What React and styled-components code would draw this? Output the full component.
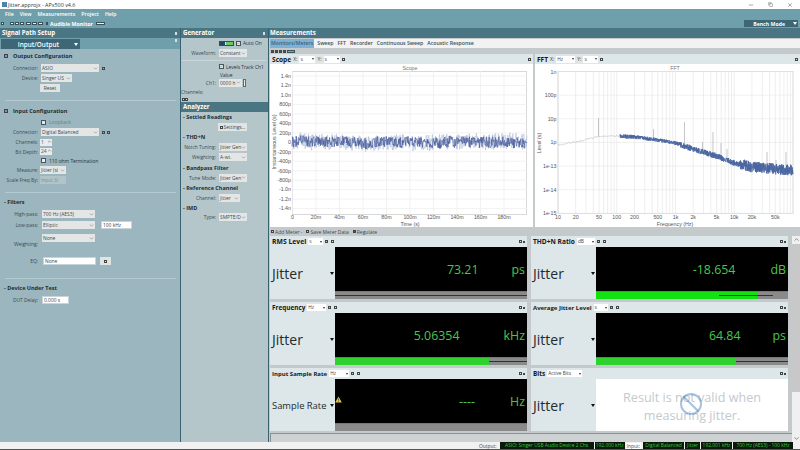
import React from 'react';
import styled, { createGlobalStyle } from 'styled-components';
import { ChevronDown, ChevronUp, Minus, Copy, X, Ban, Check } from 'lucide-react';

const GlobalStyle = createGlobalStyle`
  html, body { margin: 0; padding: 0; background: #fff; }
  * { box-sizing: border-box; }
  body { font-family: "Open Sans", "Noto Sans", sans-serif; }
`;

const Page = styled.div`
  width: 800px;
  height: 450px;
  overflow: hidden;
  display: flex;
  flex-direction: column;
  color: #26343a;
  font-size: 4.9px;
`;

const TitleBar = styled.div`
  height: 9px;
  background: #fff;
  display: flex;
  align-items: center;
  padding: 0 7px 0 2px;
  color: #333;
  font-size: 5.4px;
`;

const AppIcon = styled.span`
  width: 5px;
  height: 5px;
  background: #4a86a8;
  margin-right: 1px;
`;

const WindowButtons = styled.div`
  margin-left: auto;
  display: flex;
  align-items: center;
  gap: 14px;
  color: #555;
`;

const MenuBar = styled.div`
  height: 10px;
  background: #6f9fab;
  display: flex;
  align-items: center;
  gap: 6px;
  padding-left: 5px;
  color: #fff;
  font-weight: 600;
  font-size: 5.2px;
`;

const ToolBar = styled.div`
  height: 9px;
  background: #6f9fab;
  display: flex;
  align-items: center;
  padding: 0 2px 0 1px;
  color: #fff;
  font-weight: 700;
  font-size: 5.3px;
`;

const ToolGroup = styled.div`
  display: flex;
  gap: 1px;
  margin-right: ${p => p.$mr || 0}px;
  margin-left: ${p => p.$ml || 0}px;
`;

const ToolDot = styled.span`
  width: ${p => p.$w || 3}px;
  height: 3px;
  background: ${p => p.$c || '#e8f0f2'};
  border: 0.5px solid #38525c;
`;

const BenchMode = styled.div`
  margin-left: auto;
  width: 54px;
  height: 7px;
  background: #3d6676;
  display: flex;
  align-items: center;
  justify-content: flex-end;
  gap: 8px;
  padding-right: 1px;
  font-size: 5.2px;
`;

const Caret = styled.span`
  width: 0;
  height: 0;
  border-left: ${p => p.$s || 2}px solid transparent;
  border-right: ${p => p.$s || 2}px solid transparent;
  border-top: ${p => (p.$s || 2) + 1}px solid ${p => p.$c || '#fff'};
`;

const Columns = styled.div`
  flex: 1;
  display: flex;
  min-height: 0;
`;

const SetupColumn = styled.section`
  width: 181px;
  background: #9bb6be;
  border-right: 1px solid #37616f;
`;

const GeneratorColumn = styled.section`
  width: 88px;
  background: #b5c6cb;
  border-right: 1px solid #37616f;
`;

const MeasureColumn = styled.section`
  flex: 1;
  min-width: 0;
  background: #c4cacc;
  display: flex;
  flex-direction: column;
`;

const PanelTitle = styled.div`
  height: 10px;
  background: #4a7684;
  color: #fff;
  font-weight: 700;
  font-size: 6.1px;
  line-height: 10px;
  padding-left: ${p => p.$pl || 2}px;
  display: flex;
  align-items: center;
  justify-content: space-between;
  padding-right: 3px;
`;

const TitlePin = styled.span`
  width: 2px;
  height: 3px;
  background: #cfe0e4;
`;

const TabStrip = styled.div`
  height: 11px;
  background: #6f9fab;
  padding-top: 1px;
  display: flex;
  justify-content: space-between;
  align-items: flex-start;
  padding-right: 3px;
`;

const ActiveTab = styled.div`
  margin-left: 1px;
  width: 79px;
  height: 10px;
  background: #3d6676;
  color: #fff;
  font-weight: 600;
  font-size: 6.4px;
  display: flex;
  align-items: center;
  justify-content: flex-end;
  gap: 15px;
  padding-right: 2px;
`;

const Heading = styled.div`
  height: 10px;
  margin-top: ${p => p.$mt || 0}px;
  padding-left: ${p => p.$pl || 4}px;
  display: flex;
  align-items: center;
  gap: ${p => p.$gap || 2}px;
  font-weight: 700;
  font-size: 5.5px;
  color: #1f2c31;
`;

const Divider = styled.hr`
  margin: ${p => p.$mt || 0}px ${p => p.$r || 4}px 0 ${p => p.$l || 5}px;
  border: 0;
  height: 1px;
  background: ${p => p.$c || '#b4cbd2'};
`;

const Row = styled.div`
  height: ${p => p.$h || 10}px;
  margin-top: ${p => p.$mt || 0}px;
  display: flex;
  align-items: center;
  white-space: nowrap;
`;

const Label = styled.span`
  width: ${p => p.$w || 38}px;
  margin-right: ${p => p.$mr || 3}px;
  text-align: right;
  white-space: nowrap;
  flex-shrink: 0;
  color: #3a4b52;
`;

const MutedText = styled.span`
  color: #6d7f86;
`;

const SelectBox = styled.div`
  width: ${p => p.$w}px;
  height: 8px;
  background: ${p => (p.$off ? '#b3c4c9' : '#e4e6e6')};
  color: ${p => (p.$off ? '#7d8d92' : '#3a474c')};
  display: flex;
  align-items: center;
  justify-content: space-between;
  padding: 0 1px;
  overflow: hidden;
  white-space: nowrap;
  flex-shrink: 0;
  align-self: ${p => (p.$top ? 'flex-start' : 'center')};
  margin-left: ${p => p.$ml || 0}px;
  svg { flex-shrink: 0; color: #556; }
`;

const TextInput = styled.div`
  width: ${p => p.$w}px;
  height: 8px;
  background: #fff;
  border: 0.5px solid #c8d4d8;
  color: #444;
  padding-left: 1px;
  line-height: 7px;
  margin-left: ${p => p.$ml || 0}px;
`;

const PushButton = styled.div`
  width: ${p => p.$w}px;
  height: 8px;
  margin-left: ${p => p.$ml || 0}px;
  background: #dfe4e5;
  display: flex;
  align-items: center;
  justify-content: center;
  gap: 1px;
  color: #38474d;
`;

const Spinner = styled.div`
  width: 12px;
  height: 7px;
  background: #e9ecec;
  padding-left: 1px;
  line-height: 7px;
  color: #555;
  display: flex;
  justify-content: space-between;
  svg { color: #333; }
`;

const SpinButtons = styled.span`
  width: 3px;
  height: 8px;
  margin-left: 1px;
  background: #e9ecec;
  border: 0.5px solid #5b6b71;
`;

const CheckBox = styled.span`
  width: 5px;
  height: 5px;
  background: ${p => (p.$soft ? '#dfe7e9' : '#e8eeee')};
  border: 0.5px solid #45565c;
  margin: 0 ${p => p.$mr || 2}px 0 ${p => p.$ml || 0}px;
  display: inline-flex;
  align-items: center;
  justify-content: center;
  flex-shrink: 0;
  svg { color: #333; }
`;

const TinyBox = styled.span`
  width: ${p => p.$s || 3}px;
  height: ${p => p.$s || 3}px;
  border: 0.6px solid #444;
  background: ${p => p.$c || 'transparent'};
  margin-left: ${p => p.$ml || 0}px;
  flex-shrink: 0;
`;

const GenToggle = styled.span`
  width: 15px;
  height: 5px;
  margin: 0 2px 0 38px;
  background: linear-gradient(90deg, #1e4a68 0 5px, #dbe6e0 5px 6px, #6cc56c 6px);
  border: 0.5px solid #2b5060;
`;

const Tabs = styled.div`
  height: 9px;
  margin-top: 1px;
  margin-left: 1px;
  background: #f2f2f2;
  display: flex;
  align-items: center;
  gap: 2px;
  font-weight: 600;
  font-size: 5.2px;
  color: #32505a;
`;

const Tab = styled.span`
  height: 9px;
  line-height: 9px;
  padding: 0 1px;
  background: ${p => (p.$active ? '#7fb1d6' : 'transparent')};
  color: ${p => (p.$active ? '#39647a' : '#32505a')};
`;

const SubBar = styled.div`
  height: 6px;
  margin-left: 1px;
  background: #c4cacc;
  display: flex;
  align-items: center;
  gap: 1px;
  padding-left: 1px;
`;

const ChartRow = styled.div`
  height: 173px;
  padding-left: 1px;
  display: grid;
  grid-template-columns: 263px 265px;
  gap: 2px;
`;

const ChartPanel = styled.div`
  background: #fff;
  display: flex;
  flex-direction: column;
  min-width: 0;
`;

const PaneHead = styled.div`
  height: ${p => p.$h || 10}px;
  background: #dde6e8;
  display: flex;
  align-items: center;
  padding: 0 2px;
  gap: 2px;
  flex-shrink: 0;
`;

const PaneName = styled.span`
  font-weight: 700;
  font-size: ${p => p.$size || 7}px;
  color: #15191b;
  white-space: nowrap;
`;

const UnitBox = styled.span`
  width: ${p => p.$w || 15}px;
  height: 7px;
  background: #fff;
  color: #444;
  font-size: 4.8px;
  line-height: 7px;
  padding-left: 1px;
  display: flex;
  justify-content: space-between;
  align-items: center;
  padding-right: 1px;
`;

const AxisLetter = styled.span`
  color: #444;
  font-size: 5px;
`;

const HeadEnd = styled.span`
  margin-left: auto;
  display: flex;
  gap: 1px;
  align-items: center;
`;

const MeterBar = styled.div`
  height: 9px;
  margin-left: 1px;
  display: flex;
  align-items: center;
  gap: 4px;
  padding-left: 1px;
  font-size: 5px;
  color: #39474c;
`;

const BarItem = styled.span`
  display: flex;
  align-items: center;
  gap: 1px;
`;

const MeterArea = styled.div`
  flex: 1;
  min-height: 0;
  margin-left: 1px;
  display: flex;
  position: relative;
`;

const MeterGrid = styled.div`
  width: 523px;
  display: grid;
  grid-template-columns: 257px 257px;
  grid-auto-rows: 63px;
  column-gap: 4px;
  row-gap: 3px;
  align-content: start;
`;

const MeterCard = styled.div`
  display: flex;
  flex-direction: column;
  background: #dde6e8;
`;

const MeterBody = styled.div`
  flex: 1;
  display: flex;
  min-height: 0;
`;

const SourcePick = styled.div`
  width: 65px;
  padding: 0 1px 0 2px;
  display: flex;
  align-items: center;
  justify-content: space-between;
  font-size: ${p => p.$size || 14}px;
  color: #222b2f;
  white-space: nowrap;
`;

const Display = styled.div`
  flex: 1;
  display: flex;
  flex-direction: column;
  min-width: 0;
  position: relative;
`;

const Readout = styled.div`
  height: 44px;
  background: #000;
  color: #45c84f;
  display: flex;
  align-items: center;
  justify-content: flex-end;
  padding-right: 2px;
  font-size: 12.4px;
`;

const ReadValue = styled.span`
  margin-right: ${p => p.$gap}px;
`;

const ReadUnit = styled.span``;

const LevelBar = styled.div`
  height: 8px;
  background: #8a8a8a;
  position: relative;
  border-top: 1px solid #777;
`;

const LevelFill = styled.div`
  height: 100%;
  width: ${p => p.$pct}%;
  background: ${p => (p.$bright ? '#12e212' : '#2ed12e')};
`;

const PeakLine = styled.div`
  position: absolute;
  top: 3px;
  height: 1px;
  left: ${p => p.$from}%;
  right: ${p => p.$to}%;
  background: #333;
`;

const WarnMark = styled.svg`
  position: absolute;
  left: 0;
  top: 17px;
`;

const InvalidNote = styled.div`
  flex: 1;
  background: #fff;
  color: #c3c9ce;
  font-size: 12.6px;
  line-height: 18px;
  text-align: center;
  display: flex;
  align-items: center;
  justify-content: center;
  position: relative;
  padding-top: 4px;
  svg {
    position: absolute;
    left: 83px;
    top: 13px;
    color: rgba(86, 134, 190, 0.5);
  }
`;

const FooterBox = styled.div`
  position: absolute;
  left: 0;
  right: 0;
  bottom: 0;
  height: 9px;
  border: 1px solid #8b9093;
  border-bottom: 0;
  background: #cdd1d2;
`;

const ScrollBar = styled.div`
  position: absolute;
  right: 0;
  top: 0;
  bottom: 0;
  width: 8px;
  background: #f0f0f0;
  display: flex;
  flex-direction: column;
  align-items: center;
  justify-content: space-between;
  color: #444;
  z-index: 1;
`;

const ScrollThumb = styled.div`
  position: absolute;
  left: 0;
  right: 0;
  top: 8px;
  height: 148px;
  background: #c8c8c8;
`;

const StatusBar = styled.div`
  height: 7px;
  background: #f1f1f1;
  display: flex;
  align-items: center;
  justify-content: flex-end;
  gap: 1px;
  padding-right: 7px;
  font-size: 4.9px;
  white-space: nowrap;
`;

const StatusLabel = styled.span`
  color: #444;
  padding: 0 1px;
  background: ${p => (p.$boxed ? '#fff' : 'transparent')};
  margin-right: 1px;
`;

const StatusValue = styled.span`
  height: 7px;
  line-height: 7px;
  background: #0a1a0a;
  color: #35c83f;
  padding: 0 1px;
  width: ${p => p.$w}px;
  text-align: center;
  overflow: hidden;
`;

const BottomEdge = styled.div`
  height: 1px;
  background: #555;
`;

// seeded so that every render draws the same trace
const makeRand = seed => () => {
  seed = (seed * 16807) % 2147483647;
  return seed / 2147483647 - 0.5;
};

const scopeTrace = (seed, amp) => {
  const rand = makeRand(seed);
  const pts = [];
  let drift = 0;
  for (let x = 292; x <= 527; x += 0.4) {
    drift = drift * 0.97 + rand() * 0.6;
    pts.push(`${x.toFixed(1)},${(142 + drift + rand() * amp).toFixed(1)}`);
  }
  return pts.join(' ');
};

const fftX = f => 558 + Math.log10(f / 10) * 58.75;
const curveKnots = [
  [10, 145], [20, 142], [50, 136.5], [100, 136], [200, 137], [500, 140],
  [1000, 143], [2000, 149], [5000, 156], [10000, 163], [20000, 167], [50000, 169], [100000, 170],
];
const curveY = f => {
  for (let i = 0; i < curveKnots.length - 1; i++) {
    const [f0, y0] = curveKnots[i];
    const [f1, y1] = curveKnots[i + 1];
    if (f <= f1) {
      const t = Math.log10(f / f0) / Math.log10(f1 / f0);
      return y0 + (y1 - y0) * t;
    }
  }
  return 170;
};

const fftTrace = (seed, from, to, step, ampAt) => {
  const rand = makeRand(seed);
  const pts = [];
  for (let x = from; x <= to; x += step) {
    const f = 10 * Math.pow(10, (x - 558) / 58.75);
    pts.push(`${x.toFixed(1)},${(curveY(f) + rand() * ampAt(x)).toFixed(1)}`);
  }
  return pts.join(' ');
};

const SCOPE_Y = ['1.4n', '1.2n', '1.0n', '800p', '600p', '400p', '200p', '0', '-200p', '-400p', '-600p', '-800p', '-1.0n', '-1.2n', '-1.4n'];
const SCOPE_X = ['0', '20m', '40m', '60m', '80m', '100m', '120m', '140m', '160m', '180m'];

const AXIS = { fontSize: 5.3, fill: '#555', fontFamily: '"Liberation Sans", sans-serif' };

const ScopeChart = () => (
  <svg width="263" height="163" viewBox="270 64 263 163">
    <text x="410" y="69.8" textAnchor="middle" {...AXIS} fill="#777">Scope</text>
    <rect x="292.5" y="71.5" width="234" height="143" fill="#fff" stroke="#d8d8d8" />
    {SCOPE_X.map((_, i) => (
      <line key={i} x1={292.5 + i * 23.5} x2={292.5 + i * 23.5} y1="71" y2="214" stroke="#ececec" strokeWidth="0.7" />
    ))}
    {SCOPE_Y.map((l, i) => (
      <g key={l}>
        <line x1="292" x2="527" y1={76 + i * 9.47} y2={76 + i * 9.47} stroke="#ececec" strokeWidth="0.7" />
        <text x="291" y={77.8 + i * 9.47} textAnchor="end" {...AXIS}>{l}</text>
      </g>
    ))}
    {SCOPE_X.map((l, i) => (
      <text key={l} x={292.5 + i * 23.5} y="219.2" textAnchor="middle" {...AXIS}>{l}</text>
    ))}
    <text x="410" y="225.5" textAnchor="middle" {...AXIS}>Time (s)</text>
    <text transform="translate(276 142) rotate(-90)" textAnchor="middle" {...AXIS}>Instantaneous Level (s)</text>
    <polyline points={scopeTrace(77, 16)} fill="none" stroke="#b9c4de" strokeWidth="0.7" />
    <polyline points={scopeTrace(4211, 11)} fill="none" stroke="#445a98" strokeWidth="0.65" />
  </svg>
);

const FFT_Y = ['1n', '100p', '10p', '1p', '1e-13', '1e-14', '1e-15'];
const FFT_X = [[10, '10'], [20, '20'], [50, '50'], [100, '100'], [200, '200'], [500, '500'], [1000, '1k'], [2000, '2k'], [5000, '5k'], [10000, '10k'], [20000, '20k'], [50000, '50k']];
const FFT_SPIKES = [[598.5, 118], [653.5, 129], [684.5, 122], [702.5, 142], [713, 132], [721, 143], [727, 149], [767, 152], [776, 160], [786, 152]];
const minorFreqs = [];
for (let d = 10; d < 100000; d *= 10) {
  for (let m = 1; m < 10; m++) minorFreqs.push(d * m);
}

const FftChart = () => (
  <svg width="265" height="163" viewBox="535 64 265 163">
    <text x="675" y="69.8" textAnchor="middle" {...AXIS} fill="#777">FFT</text>
    <rect x="558" y="71.5" width="235" height="142" fill="#fff" stroke="#d8d8d8" />
    {minorFreqs.map(f => (
      <line key={f} x1={fftX(f)} x2={fftX(f)} y1="71" y2="213" stroke={f % 10 ** Math.floor(Math.log10(f)) ? '#f1f1f1' : '#e2e2e2'} strokeWidth="0.6" />
    ))}
    {FFT_Y.map((l, i) => (
      <g key={l}>
        <line x1="558" x2="793" y1={71.5 + i * 23.65} y2={71.5 + i * 23.65} stroke="#e6e6e6" strokeWidth="0.6" />
        <text x="556.5" y={73.5 + i * 23.65} textAnchor="end" {...AXIS}>{l}</text>
      </g>
    ))}
    {FFT_X.map(([f, l]) => (
      <text key={l} x={fftX(f)} y="219.2" textAnchor="middle" {...AXIS}>{l}</text>
    ))}
    <text x="675" y="225.5" textAnchor="middle" {...AXIS}>Frequency (Hz)</text>
    <text transform="translate(541 143) rotate(-90)" textAnchor="middle" {...AXIS}>Level (s)</text>
    {FFT_SPIKES.map(([x, top]) => (
      <line key={x} x1={x} x2={x} y1={top} y2={curveY(10 * Math.pow(10, (x - 558) / 58.75))} stroke="#a9aeb5" strokeWidth="0.7" />
    ))}
    <polyline points={fftTrace(911, 558, 640, 0.9, () => 1.6)} fill="none" stroke="#b6b9bd" strokeWidth="0.6" />
    <polyline points={fftTrace(353, 620, 793, 0.15, x => (x < 680 ? 4 : x < 740 ? 6 : 11))} fill="none" stroke="#4a669f" strokeWidth="0.8" />
  </svg>
);

const Select = ({ w, children, ...rest }) => (
  <SelectBox $w={w} {...rest}>
    <span>{children}</span>
    <ChevronDown size={5} strokeWidth={2} />
  </SelectBox>
);

const Tick = () => <Check size={5} strokeWidth={3} />;

const Unit = ({ w, children }) => (
  <UnitBox $w={w}>
    {children}
    <Caret $s={1} $c="#333" />
  </UnitBox>
);

const HeadIcons = () => (
  <>
    <TinyBox $c="#b8c4c8" />
    <TinyBox $ml={1} />
  </>
);

const CardHead = ({ name, size, unit, unitW }) => (
  <PaneHead $h={11}>
    <PaneName $size={size}>{name}</PaneName>
    <Unit w={unitW}>{unit}</Unit>
    <HeadIcons />
    <HeadEnd>
      <TinyBox />
      <TinyBox $s={2} $c="#444" />
    </HeadEnd>
  </PaneHead>
);

const Meter = ({ name, size, unit, unitW, value, valueGap, unitText, pct, bright, line, pick = 'Jitter', pickSize, warn }) => (
  <MeterCard>
    <CardHead name={name} size={size} unit={unit} unitW={unitW} />
    <MeterBody>
      <SourcePick $size={pickSize}>
        {pick}
        <Caret $s={2} $c="#111" />
      </SourcePick>
      <Display>
        <Readout>
          <ReadValue $gap={valueGap}>{value}</ReadValue>
          <ReadUnit>{unitText}</ReadUnit>
        </Readout>
        {warn && (
          <WarnMark width="7" height="7" viewBox="0 0 7 7">
            <path d="M3.5 0.5 L6.8 6.5 L0.2 6.5 Z" fill="#e5c64a" />
            <path d="M3.5 2.4 V4.6 M3.5 5.2 V5.9" stroke="#333" strokeWidth="0.7" />
          </WarnMark>
        )}
        <LevelBar>
          {pct > 0 && <LevelFill $pct={pct} $bright={bright} />}
          {line && <PeakLine $from={line[0]} $to={line[1]} />}
        </LevelBar>
      </Display>
    </MeterBody>
  </MeterCard>
);

const SignalPathSetup = () => (
  <SetupColumn>
    <PanelTitle>
      Signal Path Setup
      <TitlePin />
    </PanelTitle>
    <TabStrip>
      <ActiveTab>
        Input/Output
        <Caret $s={2} />
      </ActiveTab>
      <TitlePin />
    </TabStrip>
    <Heading $mt={2} $gap={5}>
      <TinyBox $s={4} $c="#7f9aa3" />
      Output Configuration
    </Heading>
    <Row $mt={2}>
      <Label>Connector:</Label>
      <Select w={58}>ASIO</Select>
      <TinyBox $ml={3} />
    </Row>
    <Row>
      <Label>Device:</Label>
      <Select w={31}>Singer US</Select>
    </Row>
    <Row>
      <Label $mr={2} />
      <PushButton $w={20}>Reset</PushButton>
    </Row>
    <Divider $mt={7} />
    <Heading $mt={5} $gap={5}>
      <TinyBox $s={4} $c="#7f9aa3" />
      Input Configuration
    </Heading>
    <Row $mt={1}>
      <Label />
      <CheckBox $soft $mr={3} />
      <MutedText>Loopback</MutedText>
    </Row>
    <Row>
      <Label>Connector:</Label>
      <Select w={58}>Digital Balanced</Select>
      <TinyBox $ml={3} />
      <TinyBox $ml={2} />
    </Row>
    <Row>
      <Label $mr={2}>Channels:</Label>
      <Spinner>1<ChevronUp size={5} /></Spinner>
    </Row>
    <Row $h={9}>
      <Label $mr={2}>Bit Depth:</Label>
      <Spinner>24<ChevronUp size={5} /></Spinner>
    </Row>
    <Row $h={9}>
      <Label />
      <CheckBox $mr={3} />
      <span>110 ohm Termination</span>
    </Row>
    <Row>
      <Label $mr={2}>Measure:</Label>
      <Select w={26}>Jitter (si</Select>
    </Row>
    <Row $h={9}>
      <Label $mr={2}>Scale Freq By:</Label>
      <SelectBox $w={26} $off>Input SI</SelectBox>
    </Row>
    <Divider $mt={8} />
    <Heading $mt={4}>- Filters</Heading>
    <Row $mt={2}>
      <Label $mr={4}>High-pass:</Label>
      <Select w={53}>700 Hz (AES3)</Select>
    </Row>
    <Row $mt={1}>
      <Label $mr={4}>Low-pass:</Label>
      <Select w={53}>Elliptic</Select>
      <TextInput $w={31} $ml={6}>100 kHz</TextInput>
    </Row>
    <Row $h={20} $mt={4}>
      <Label $mr={4}>Weighting:</Label>
      <Select w={53} $top>None</Select>
    </Row>
    <Row $mt={2}>
      <Label $mr={5}>EQ:</Label>
      <TextInput $w={53}>None</TextInput>
      <PushButton $w={11} $ml={4}><TinyBox /></PushButton>
    </Row>
    <Divider $mt={12} />
    <Heading $mt={4}>- Device Under Test</Heading>
    <Row $mt={2}>
      <Label $mr={4}>DUT Delay:</Label>
      <TextInput $w={27}>0.000 s</TextInput>
    </Row>
  </SetupColumn>
);

const GeneratorAnalyzer = () => (
  <GeneratorColumn>
    <PanelTitle>
      Generator
      <TitlePin />
    </PanelTitle>
    <Row>
      <GenToggle />
      <CheckBox><Tick /></CheckBox>
      <span>Auto On</span>
    </Row>
    <Row>
      <Label $w={35}>Waveform:</Label>
      <Select w={28}>Constant</Select>
    </Row>
    <Divider $mt={2} $l={1} $r={2} $c="#c9d6da" />
    <Row $h={9} $mt={1}>
      <Label $w={35} />
      <CheckBox><Tick /></CheckBox>
      <span>Levels Track Ch1</span>
    </Row>
    <Row $h={7}>
      <Label $w={36} />
      <span>Value</span>
    </Row>
    <Row $h={9}>
      <Label $w={35}>Ch1:</Label>
      <Select w={23}>0000 h</Select>
      <SpinButtons />
    </Row>
    <Row $h={10}>
      <Label $w={22} $mr={0}>Channels:</Label>
    </Row>
    <Row $h={5}>
      <TinyBox $s={3} $ml={1} $c="#d8e0e2" />
      <TinyBox $s={3} $c="#d8e0e2" />
    </Row>
    <PanelTitle>Analyzer</PanelTitle>
    <Heading $pl={2}>- Settled Readings</Heading>
    <Row $h={10}>
      <Label $w={33} $mr={4} />
      <PushButton $w={29}><TinyBox />Settings...</PushButton>
    </Row>
    <Heading $pl={2}>- THD+N</Heading>
    <Row $h={10}>
      <Label $w={35}>Notch Tuning:</Label>
      <Select w={28}>Jitter Gen</Select>
    </Row>
    <Row $h={10}>
      <Label $w={35}>Weighting:</Label>
      <Select w={28}>A-wt.</Select>
    </Row>
    <Heading $pl={2} $mt={1}>- Bandpass Filter</Heading>
    <Row $h={9}>
      <Label $w={35}>Tune Mode:</Label>
      <Select w={28}>Jitter Gen</Select>
    </Row>
    <Heading $pl={2} $mt={1}>- Reference Channel</Heading>
    <Row $h={10}>
      <Label $w={35}>Channel:</Label>
      <Select w={21}>Jitter</Select>
    </Row>
    <Heading $pl={2}>- IMD</Heading>
    <Row $h={8}>
      <Label $w={35}>Type:</Label>
      <Select w={28}>SMPTE/D</Select>
    </Row>
  </GeneratorColumn>
);

const Measurements = () => (
  <MeasureColumn>
    <PanelTitle $pl={1}>Measurements</PanelTitle>
    <Tabs>
      <Tab $active>Monitors/Meters</Tab>
      <Tab>Sweep</Tab>
      <Tab>FFT</Tab>
      <Tab>Recorder</Tab>
      <Tab>Continuous Sweep</Tab>
      <Tab>Acoustic Response</Tab>
    </Tabs>
    <SubBar>
      <TinyBox $c="#555" />
      <TinyBox $c="#555" />
      <TinyBox $c="#555" />
      <TinyBox $c="#555" />
      <ToolDot $w={8} $c="#62c562" />
    </SubBar>
    <ChartRow>
      <ChartPanel>
        <PaneHead>
          <PaneName $size={6.6}>Scope</PaneName>
          <AxisLetter>X:</AxisLetter>
          <Unit w={16}>s</Unit>
          <AxisLetter>Y:</AxisLetter>
          <Unit w={16}>s</Unit>
          <TinyBox />
          <HeadEnd><TinyBox /></HeadEnd>
        </PaneHead>
        <ScopeChart />
      </ChartPanel>
      <ChartPanel>
        <PaneHead>
          <PaneName $size={6.6}>FFT</PaneName>
          <AxisLetter>X:</AxisLetter>
          <Unit w={19}>Hz</Unit>
          <AxisLetter>Y:</AxisLetter>
          <Unit w={15}>s</Unit>
          <TinyBox />
          <HeadEnd><TinyBox /></HeadEnd>
        </PaneHead>
        <FftChart />
      </ChartPanel>
    </ChartRow>
    <MeterBar>
      <BarItem><TinyBox />Add Meter -</BarItem>
      <BarItem><TinyBox />Save Meter Data</BarItem>
      <BarItem><TinyBox $c="#555" />Regulate</BarItem>
    </MeterBar>
    <MeterArea>
      <MeterGrid>
        <Meter name="RMS Level" size={6.8} unit="s" unitW={15} value="73.21" valueGap={33} unitText="ps" pct={0} line={[0, 0]} />
        <Meter name="THD+N Ratio" size={6.6} unit="dB" unitW={18} value="-18.654" valueGap={35} unitText="dB" pct={84} bright line={[64, 8]} />
        <Meter name="Frequency" size={6.4} unit="Hz" unitW={19} value="5.06354" valueGap={44} unitText="kHz" pct={80} line={[80, 0]} />
        <Meter name="Average Jitter Level" size={6} unit="s" unitW={14} value="64.84" valueGap={32} unitText="ps" pct={73} line={[73, 0]} />
        <Meter name="Input Sample Rate" size={6} unit="Hz" unitW={20} value="----" valueGap={35} unitText="Hz" pct={0} pick="Sample Rate" pickSize={9.4} warn />
        <MeterCard>
          <PaneHead $h={11}>
            <PaneName $size={6.4}>Bits</PaneName>
            <Unit w={35}>Active Bits</Unit>
            <HeadEnd>
              <TinyBox />
              <TinyBox $s={2} $c="#444" />
            </HeadEnd>
          </PaneHead>
          <MeterBody>
            <SourcePick>
              Jitter
              <Caret $s={2} $c="#111" />
            </SourcePick>
            <InvalidNote>
              <span>Result is not valid when<br />measuring jitter.</span>
              <Ban size={24} strokeWidth={2} />
            </InvalidNote>
          </MeterBody>
        </MeterCard>
      </MeterGrid>
      <FooterBox />
      <ScrollBar>
        <ChevronUp size={7} />
        <ScrollThumb />
        <ChevronDown size={7} />
      </ScrollBar>
    </MeterArea>
  </MeasureColumn>
);

export default function App() {
  return (
    <Page>
      <GlobalStyle />
      <TitleBar>
        <AppIcon />
        Jitter.approjx - APx500 v4.6
        <WindowButtons>
          <Minus size={6} />
          <Copy size={5} />
          <X size={6} />
        </WindowButtons>
      </TitleBar>
      <MenuBar>
        <span>File</span>
        <span>View</span>
        <span>Measurements</span>
        <span>Project</span>
        <span>Help</span>
      </MenuBar>
      <ToolBar>
        <ToolGroup $mr={6}><ToolDot /></ToolGroup>
        <ToolGroup $mr={2}><ToolDot $w={4} /><ToolDot $w={4} /><ToolDot $w={4} /></ToolGroup>
        <ToolGroup $mr={3}><ToolDot $w={5} /><ToolDot $w={5} /><ToolDot $w={5} /></ToolGroup>
        <ToolGroup $mr={2}><ToolDot $w={2} /></ToolGroup>
        Audible Monitor
        <ToolGroup $ml={3}><ToolDot $w={9} /></ToolGroup>
        <BenchMode>
          Bench Mode
          <Caret $s={2} />
        </BenchMode>
      </ToolBar>
      <Columns>
        <SignalPathSetup />
        <GeneratorAnalyzer />
        <Measurements />
      </Columns>
      <StatusBar>
        <StatusLabel>Output:</StatusLabel>
        <StatusValue $w={94}>ASIO: Singer USB Audio Device 2 Chs</StatusValue>
        <StatusValue $w={30}>192.000 kHz</StatusValue>
        <StatusLabel $boxed>Input:</StatusLabel>
        <StatusValue $w={41}>Digital Balanced</StatusValue>
        <StatusValue $w={15}>Jitter</StatusValue>
        <StatusValue $w={31}>192.001 kHz</StatusValue>
        <StatusValue $w={60}>700 Hz (AES3) - 100 kHz</StatusValue>
      </StatusBar>
      <BottomEdge />
    </Page>
  );
}
